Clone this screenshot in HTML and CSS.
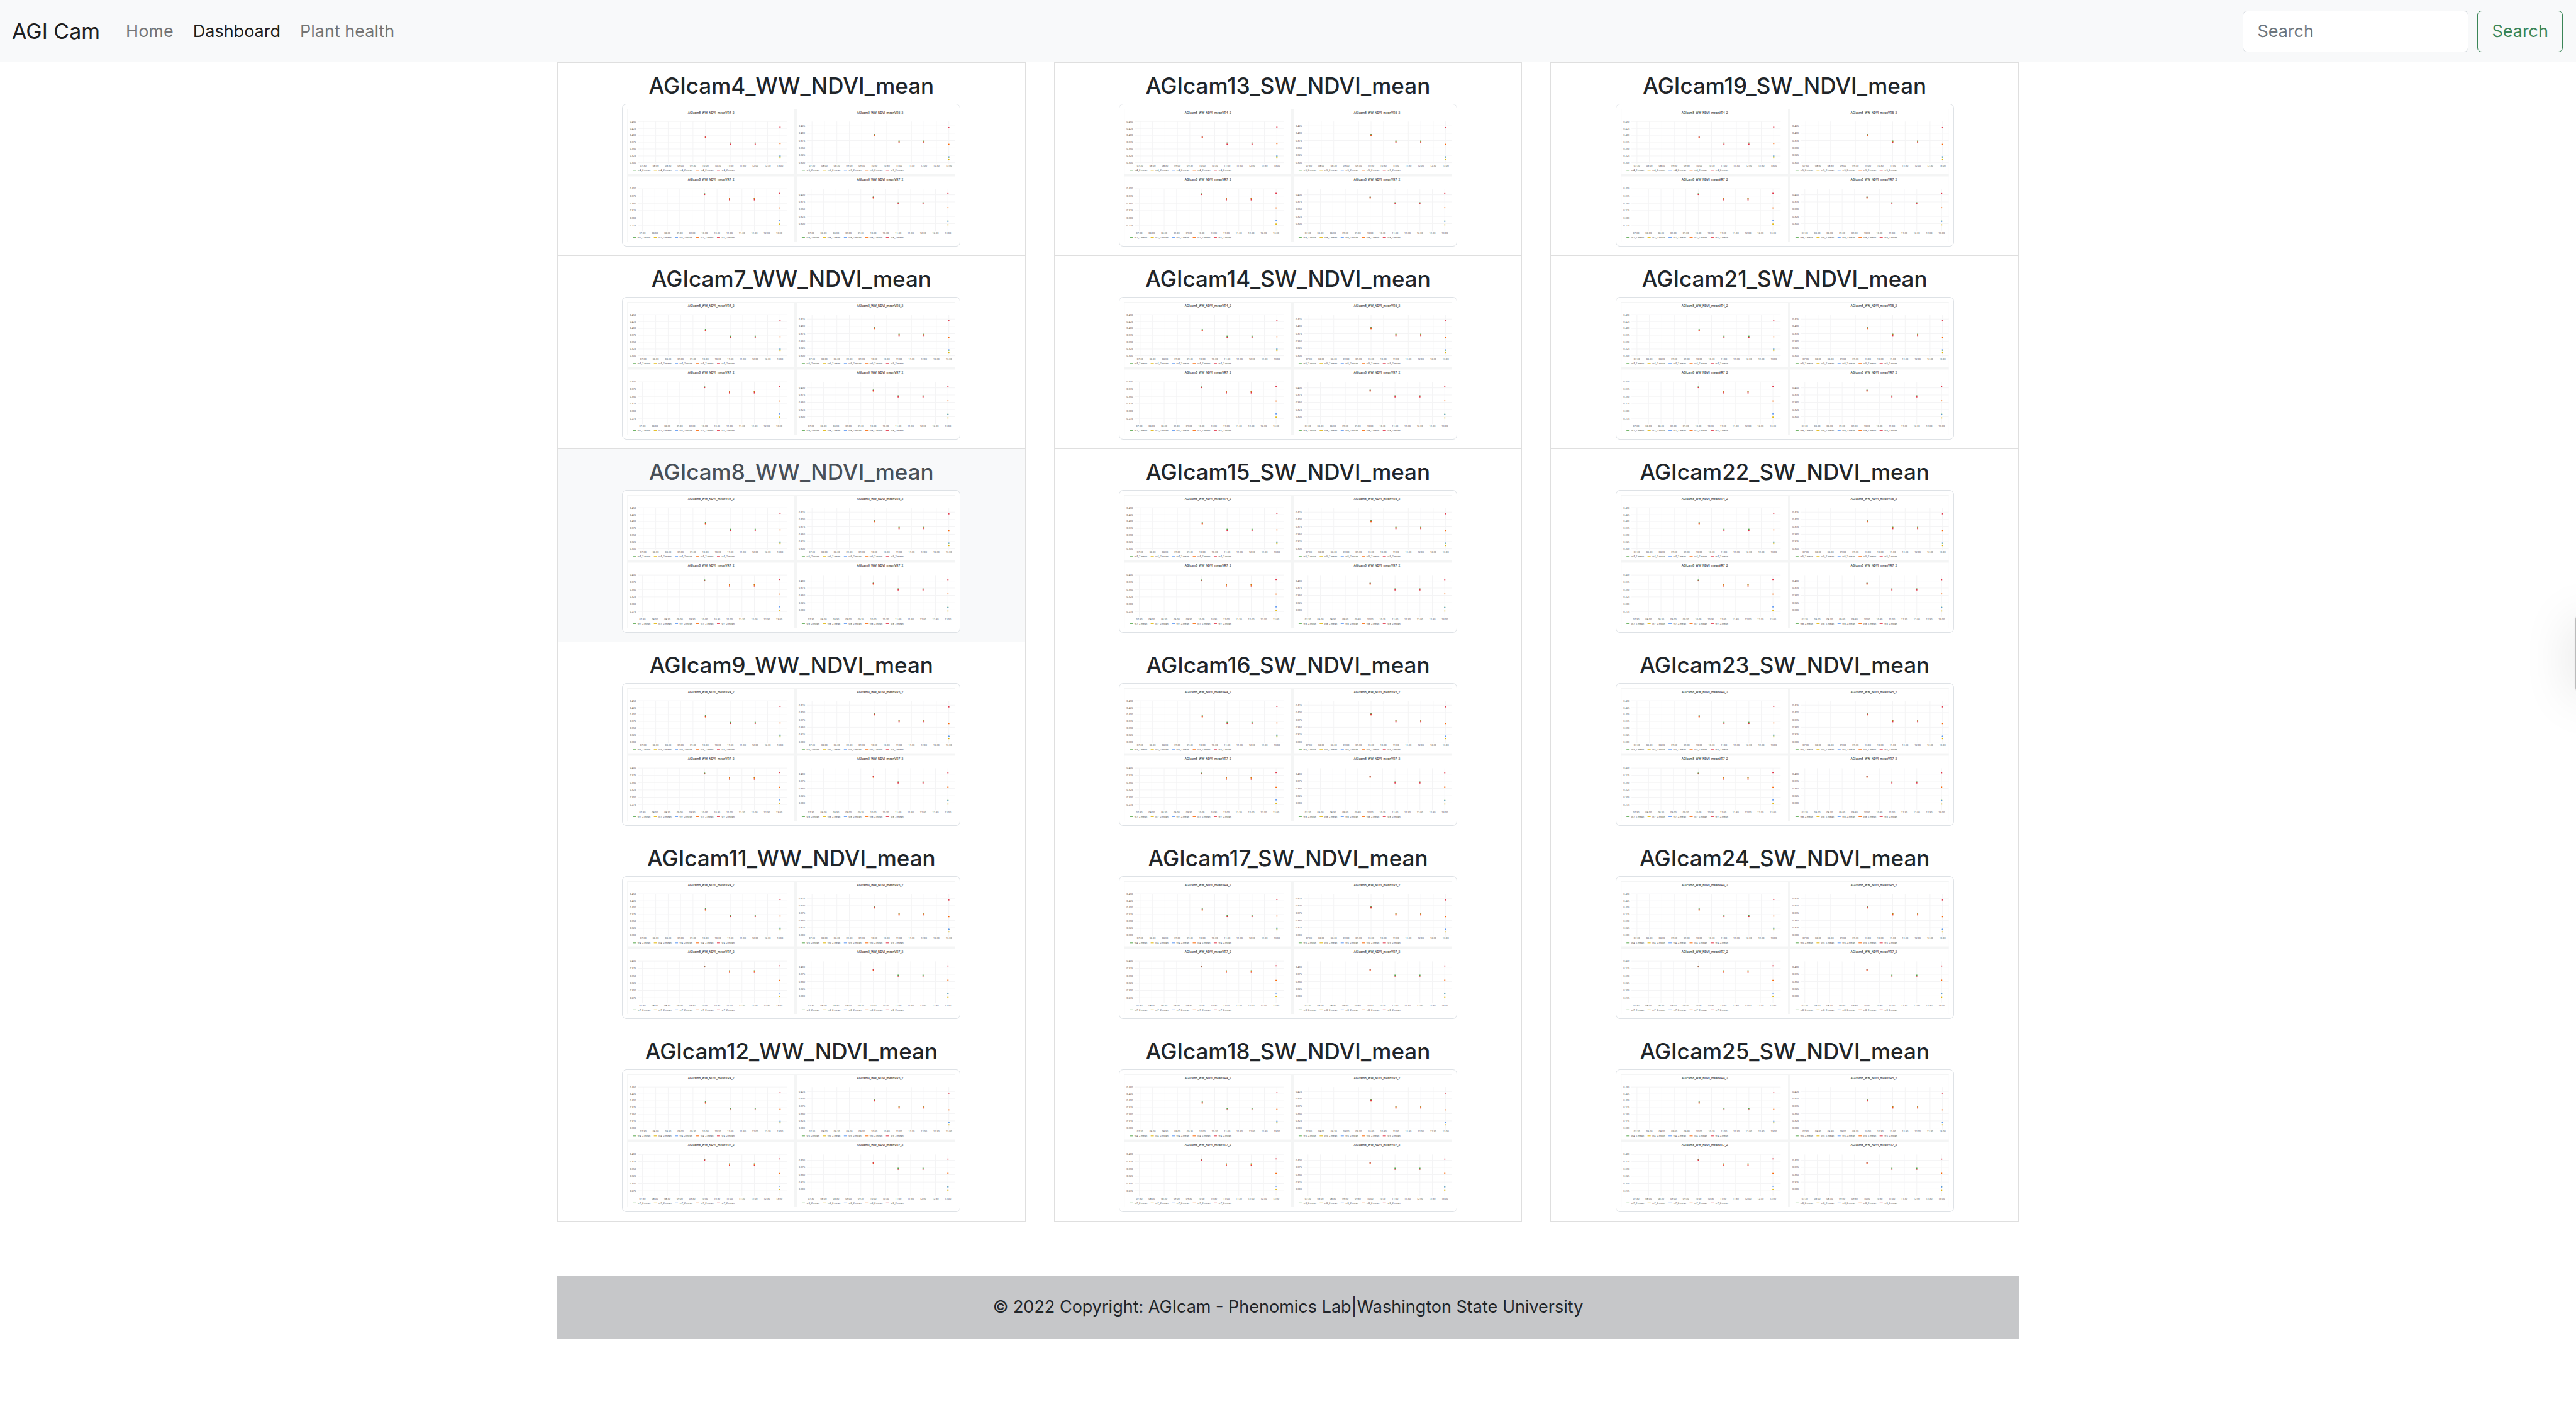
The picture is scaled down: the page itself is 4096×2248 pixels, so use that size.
FILE: index.html
```html
<!DOCTYPE html>
<html lang="en">
<head>
<meta charset="utf-8">
<meta name="viewport" content="width=device-width, initial-scale=1">
<title>AGI Cam - Dashboard</title>
<link rel="stylesheet" href="styles.css">
</head>
<body>
<header class="navbar">
  <a class="brand" href="#">AGI Cam</a>
  <nav class="nav">
    <a class="nav-link" href="#">Home</a>
    <a class="nav-link active" href="#" aria-current="page">Dashboard</a>
    <a class="nav-link" href="#">Plant health</a>
  </nav>
  <form class="search" role="search">
    <input class="search-input" type="search" placeholder="Search" aria-label="Search">
    <button class="search-button" type="button">Search</button>
  </form>
</header>

<main class="container board">
  <div class="list">
    <a class="item" href="#"><h5 class="title">AGIcam4_WW_NDVI_mean</h5><div class="thumb"></div></a>
    <a class="item" href="#"><h5 class="title">AGIcam7_WW_NDVI_mean</h5><div class="thumb"></div></a>
    <a class="item focused" href="#"><h5 class="title">AGIcam8_WW_NDVI_mean</h5><div class="thumb"></div></a>
    <a class="item" href="#"><h5 class="title">AGIcam9_WW_NDVI_mean</h5><div class="thumb"></div></a>
    <a class="item" href="#"><h5 class="title">AGIcam11_WW_NDVI_mean</h5><div class="thumb"></div></a>
    <a class="item" href="#"><h5 class="title">AGIcam12_WW_NDVI_mean</h5><div class="thumb"></div></a>
  </div>
  <div class="list">
    <a class="item" href="#"><h5 class="title">AGIcam13_SW_NDVI_mean</h5><div class="thumb"></div></a>
    <a class="item" href="#"><h5 class="title">AGIcam14_SW_NDVI_mean</h5><div class="thumb"></div></a>
    <a class="item" href="#"><h5 class="title">AGIcam15_SW_NDVI_mean</h5><div class="thumb"></div></a>
    <a class="item" href="#"><h5 class="title">AGIcam16_SW_NDVI_mean</h5><div class="thumb"></div></a>
    <a class="item" href="#"><h5 class="title">AGIcam17_SW_NDVI_mean</h5><div class="thumb"></div></a>
    <a class="item" href="#"><h5 class="title">AGIcam18_SW_NDVI_mean</h5><div class="thumb"></div></a>
  </div>
  <div class="list">
    <a class="item" href="#"><h5 class="title">AGIcam19_SW_NDVI_mean</h5><div class="thumb"></div></a>
    <a class="item" href="#"><h5 class="title">AGIcam21_SW_NDVI_mean</h5><div class="thumb"></div></a>
    <a class="item" href="#"><h5 class="title">AGIcam22_SW_NDVI_mean</h5><div class="thumb"></div></a>
    <a class="item" href="#"><h5 class="title">AGIcam23_SW_NDVI_mean</h5><div class="thumb"></div></a>
    <a class="item" href="#"><h5 class="title">AGIcam24_SW_NDVI_mean</h5><div class="thumb"></div></a>
    <a class="item" href="#"><h5 class="title">AGIcam25_SW_NDVI_mean</h5><div class="thumb"></div></a>
  </div>
</main>

<footer class="container footer">© 2022 Copyright: AGIcam - Phenomics Lab|Washington State University</footer>
<div class="edge-tab" aria-hidden="true"></div>
<script src="charts.js"></script>
</body>
</html>
```
FILE: styles.css
```css
*, *::before, *::after { box-sizing: border-box; }

body {
  margin: 0;
  background: #fff;
  color: #212529;
  font-family: Inter, "Liberation Sans", sans-serif;
  font-size: 27px;
  line-height: 42px;
}

a { color: inherit; text-decoration: none; }

.navbar {
  display: flex;
  align-items: center;
  height: 99px;
  padding: 0 21px 0 19px;
  background: #f8f9fa;
}

.brand { margin-right: 27px; font-size: 34px; color: rgba(0, 0, 0, .9); }
.nav { display: flex; flex: 1; gap: 3px; }
.nav-link { padding: 14px; color: rgba(0, 0, 0, .55); }
.nav-link.active { color: rgba(0, 0, 0, .9); }

.search { display: flex; gap: 14px; }
.search-input, .search-button {
  height: 66px;
  padding: 0 22px;
  border: 1px solid #ced4da;
  border-radius: 7px;
  background: #fff;
  font: inherit;
}
.search-input { width: 359px; color: #212529; }
.search-input::placeholder { color: #6c757d; opacity: 1; }
.search-button { border-color: #3a8557; background: transparent; color: #3a8557; }

.container { width: 100%; max-width: 2324px; margin: 0 auto; }
.board { display: grid; grid-template-columns: repeat(3, 1fr); gap: 45px; }

.item {
  display: flex;
  flex-direction: column;
  align-items: center;
  padding: 14px 28px;
  border: 1px solid #dfdfdf;
  border-top: 0;
}
.item:first-child { border-top: 1px solid #dfdfdf; }
.item.focused { background: #f8f9fa; color: #495057; }

.title { margin: 0 0 7px; font-size: 35px; font-weight: 500; line-height: 44px; }

.thumb {
  width: 538px;
  height: 227px;
  padding: 7px;
  border: 1px solid #dee2e6;
  border-radius: 7px;
  background: #fff;
}
.chart { display: block; width: 100%; height: 100%; font-family: Roboto, sans-serif; }
.gutter { fill: #f4f5f5; }
.panel { fill: #fff; }
.grid { stroke: #f4f4f5; stroke-width: 1; fill: none; }
.chart-title { font-size: 5px; font-weight: 500; fill: #444; text-anchor: middle; }
.tick { font-size: 4px; fill: #555; text-anchor: middle; }
.tick-y { text-anchor: end; }
.key { font-size: 4px; fill: #555; }

.footer {
  margin-top: 86px;
  padding: 29px 0;
  background: #c6c7c9;
  text-align: center;
}

/* drawer handle tucked behind the window's right edge */
.edge-tab {
  position: fixed;
  top: 979px;
  right: -39px;
  width: 40px;
  height: 120px;
  border-radius: 6px;
  background: #bbb;
  box-shadow: 0 0 2px rgba(0, 0, 0, .3), 0 8px 80px rgba(0, 0, 0, .15);
}
```
FILE: charts.js
```js
const colors = { g: '#56a64b', y: '#e0b400', b: '#5794f2', o: '#fa6400', r: '#e02f44' };
const times = ['07:30', '08:00', '08:30', '09:00', '09:30', '10:00', '10:30', '11:00', '11:30', '12:00', '12:30', '13:00'];

// x, y, w, h: panel box. gx: first vertical line. dots: [time index, y, colour]
const panels = [
  { x: 1, y: 1, w: 266, h: 103, name: 'VR4_2', key: 'vr4_2.mean', gx: 25.7, top: 20.3, bottom: 86, right: 255.3,
    ticks: [['0.450', 20.3], ['0.425', 31.3], ['0.400', 42.3], ['0.375', 53.3], ['0.350', 64.3], ['0.325', 75.3], ['0.300', 86]],
    dots: [[5, 44, 'g'], [5, 46, 'o'], [5, 45.2, 'r'], [7, 54.7, 'g'], [7, 56.5, 'r'], [9, 54.7, 'g'], [9, 56.5, 'r'],
      [11, 29.3, 'r'], [11, 55.7, 'o'], [11, 76, 'g'], [11, 74.8, 'b'], [11, 77.7, 'y']] },
  { x: 271, y: 1, w: 253, h: 103, name: 'VR5_2', key: 'vr5_2.mean', gx: 295.3, top: 20.3, bottom: 86, right: 524,
    ticks: [['0.425', 27.3], ['0.400', 39], ['0.375', 50.7], ['0.350', 62.7], ['0.325', 74.3], ['0.300', 86]],
    dots: [[5, 41, 'g'], [5, 42.7, 'o'], [5, 41.8, 'r'], [7, 51.5, 'g'], [7, 52.5, 'o'], [7, 53.8, 'r'],
      [9, 51.5, 'g'], [9, 52.5, 'o'], [9, 53.8, 'r'], [11, 30, 'r'], [11, 56.7, 'o'], [11, 77.2, 'g'], [11, 76.6, 'b'], [11, 80.7, 'y']] },
  { x: 1, y: 108, w: 266, h: 104, name: 'VR7_2', key: 'vr7_2.mean', gx: 24.4, top: 127.7, bottom: 193, right: 255.3,
    ticks: [['0.400', 127.7], ['0.375', 139.3], ['0.350', 151], ['0.325', 162.7], ['0.300', 174.3], ['0.275', 186]],
    dots: [[5, 135.8, 'g'], [5, 136.9, 'r'], [7, 143, 'g'], [7, 143.7, 'o'], [7, 145.5, 'r'], [9, 143, 'g'], [9, 143.7, 'o'], [9, 145.5, 'r'],
      [11, 135, 'r'], [11, 158.3, 'o'], [11, 178.7, 'b'], [11, 184, 'y']] },
  { x: 271, y: 108, w: 253, h: 104, name: 'VR7_2', key: 'vr8_2.mean', gx: 293.9, top: 128, bottom: 193, right: 524,
    ticks: [['0.400', 137.3], ['0.375', 148.7], ['0.350', 160.3], ['0.325', 172], ['0.300', 183.3]],
    dots: [[5, 140.8, 'g'], [5, 142.4, 'o'], [5, 141.4, 'r'], [7, 150, 'g'], [7, 151.6, 'r'], [9, 150, 'g'], [9, 151.6, 'r'],
      [11, 135.3, 'r'], [11, 158, 'o'], [11, 179.3, 'g'], [11, 179.8, 'b'], [11, 185.3, 'y']] }
];
const step = 19.87;

function drawPanel(p) {
  const x0 = p.x - 1;
  const tickRow = p.bottom + 6.5;
  const keyRow = p.bottom + 13.8;
  let out = `<rect class="panel" x="${p.x}" y="${p.y}" width="${p.w}" height="${p.h}"/>`;
  const lines = p.ticks.map(t => `M${x0 + 17} ${t[1]}H${p.right}`)
    .concat(times.map((t, i) => `M${p.gx + i * step} ${p.top}V${p.bottom + 2}`));
  out += `<path class="grid" d="${lines.join('')}"/>`;
  out += `<text class="chart-title" x="${x0 + 134}" y="${p.y + 7}">AGIcam8_WW_NDVI_mean${p.name}</text>`;
  p.ticks.forEach(t => { out += `<text class="tick tick-y" x="${x0 + 14}" y="${t[1] + 1.4}">${t[0]}</text>`; });
  times.forEach((t, i) => { out += `<text class="tick" x="${p.gx + i * step}" y="${tickRow}">${t}</text>`; });
  Object.values(colors).forEach((c, i) => {
    const kx = x0 + 9 + i * 33.6;
    out += `<rect x="${kx}" y="${keyRow - 2}" width="5" height="1" fill="${c}"/>`;
    out += `<text class="key" x="${kx + 7.5}" y="${keyRow}">${p.key}</text>`;
  });
  p.dots.forEach(d => {
    out += `<rect x="${p.gx + d[0] * step - 0.9}" y="${d[1] - 0.8}" width="1.8" height="1.6" fill="${colors[d[2]]}"/>`;
  });
  return out;
}

const chart = `<svg class="chart" viewBox="0 0 524 212"><rect class="gutter" width="524" height="212"/>${panels.map(drawPanel).join('')}</svg>`;
document.querySelectorAll('.thumb').forEach(el => { el.innerHTML = chart; });
```
